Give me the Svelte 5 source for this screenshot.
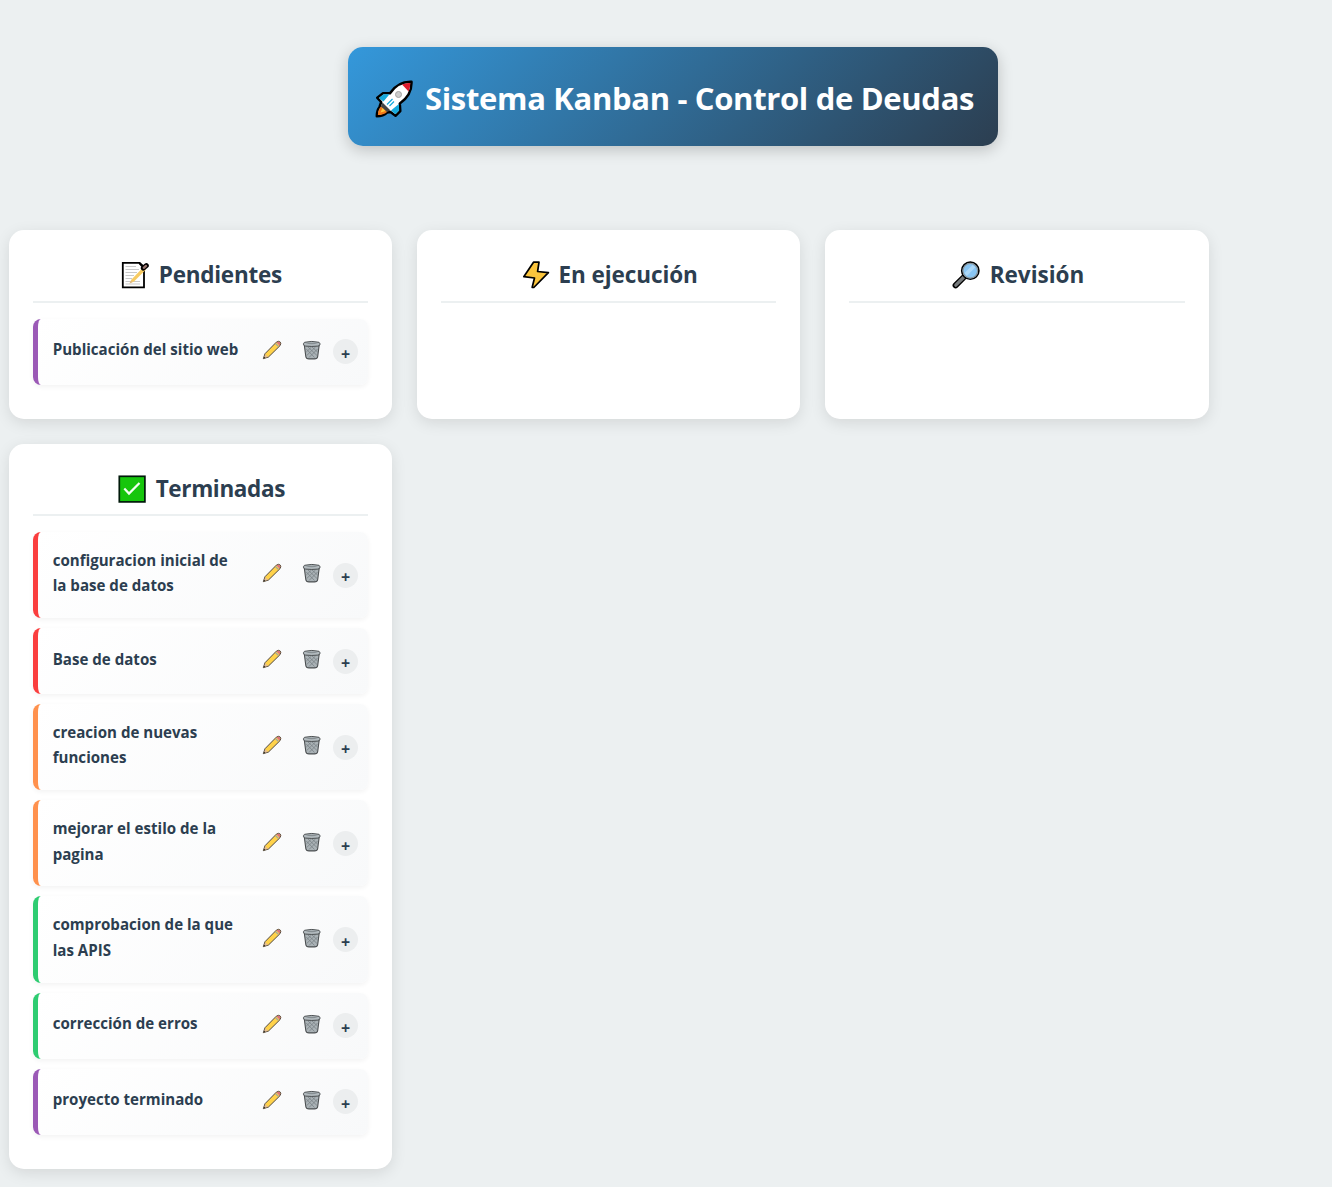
<script lang="ts">
  type Task = { lines: string[]; tone: string };
  type Column = { icon: string; title: string; cls: string; tasks: Task[] };

  const columns: Column[] = [
    {
      icon: 'memo', title: 'Pendientes', cls: 'pend',
      tasks: [{ lines: ['Publicación del sitio web'], tone: 'purple' }]
    },
    { icon: 'bolt', title: 'En ejecución', cls: 'ejec', tasks: [] },
    { icon: 'lens', title: 'Revisión', cls: 'revi', tasks: [] },
    {
      icon: 'check', title: 'Terminadas', cls: 'term',
      tasks: [
        { lines: ['configuracion inicial de', 'la base de datos'], tone: 'red' },
        { lines: ['Base de datos'], tone: 'red' },
        { lines: ['creacion de nuevas', 'funciones'], tone: 'orange' },
        { lines: ['mejorar el estilo de la', 'pagina'], tone: 'orange' },
        { lines: ['comprobacion de la que', 'las APIS'], tone: 'green' },
        { lines: ['corrección de erros'], tone: 'green' },
        { lines: ['proyecto terminado'], tone: 'purple' }
      ]
    }
  ];
</script>

<header>
  <h1>
    <svg class="rocket" viewBox="0 0 38 38" aria-hidden="true">
      <path d="M36.500 1.800C28 1.500 20.500 5 15 13.200L8 13.200 2.300 17.800 6.200 22 4.500 27C2.300 29.500 1.800 33 1.800 36.200 5.500 36.200 9 35.500 12 32.500L15.500 32 20.500 35.800 25.300 31 24.800 23.500C33 18 36.800 10 36.500 1.800Z" fill="#fff" stroke="#000" stroke-width="2.500" stroke-linejoin="round" />
      <path d="M14.500 14.200 8.500 14.300 3.800 17.900 8.500 21.500ZM23.800 24 24.200 30.500 20.500 34.300 16 30.500Z" fill="#17a9dc" />
      <path d="M27 4.400Q31 2.700 35.300 2.900 35.400 7.500 33.600 11.400Z" fill="#e01b2d" />
      <path d="M7.500 22.500 5.500 27.500 10.500 32.500 15.500 30.500Z" fill="#454545" />
      <path d="M6 26.500C3.700 28.800 3 32 2.900 35.100 6.500 35.100 9.500 34.200 12 32Z" fill="#f27818" />
      <path d="M7.500 28 5.500 32.500 10.500 31Z" fill="#ffca3a" />
      <circle cx="23.500" cy="14.500" r="3" fill="#ccc" stroke="#a3a3a3" />
      <path d="M17.500 19 12 24.500M19 21.500 14.500 26" stroke="#17a9dc" stroke-width="1.200" fill="none" />
    </svg>
    <span>Sistema Kanban - Control de Deudas</span>
  </h1>
</header>

<main>
  {#each columns as col}
    <section>
      <h2 class={col.cls}>
        <svg class="emoji" viewBox="0 0 28 28" aria-hidden="true">
          {#if col.icon === 'memo'}
            <path d="M1.800 1.800H18.500L23 6V26.300H1.800Z" fill="#fff" stroke="#000" stroke-width="1.800" />
            <path d="M4.500 5.500H15M4.500 8.500H18M4.500 11.500H16M4.500 14.500H13M4.500 17.500H11M4.500 20.500H19M4.500 23H19" stroke="#c9c9c9" stroke-width="1.200" />
            <path d="M18.300 2 22 6" stroke="#000" stroke-width="2" />
            <path d="M8.500 22.500 10.500 18.500 22.500 6 25 8.500 13 20.500Z" fill="#f7cb62" />
            <path d="M8.500 22.500 10 19.500 11.700 21Z" fill="#d9b58c" />
            <path d="M22.300 7.200 25.300 4.700" stroke="#000" stroke-width="5" stroke-linecap="round" />
            <path d="M22.800 6.800 25 4.900" stroke="#9a7770" stroke-width="2.300" stroke-linecap="round" />
          {:else if col.icon === 'bolt'}
            <path d="M11.500 1.200 17 1.200 15.600 10.500 26.400 11.600 11.800 26.500 10.200 26.300 12.500 17 1.800 15.700Z" fill="#fbc53d" stroke="#000" stroke-width="1.700" stroke-linejoin="round" />
          {:else if col.icon === 'lens'}
            <path d="M11.500 16.500 3.600 24.400" stroke="#000" stroke-width="6" stroke-linecap="round" />
            <path d="M11.500 16.500 3.800 24.200" stroke="#777b7d" stroke-width="3.200" stroke-linecap="round" />
            <circle cx="18.300" cy="9.700" r="8.600" fill="#89c6f4" stroke="#000" stroke-width="1.600" />
            <circle cx="18.300" cy="9.700" r="7.300" fill="none" stroke="#8b9499" stroke-width="1.100" />
            <path d="M12.500 12 20.500 4 23.500 6.300 14.800 15Z" fill="#bfe2fb" opacity=".65" />
          {:else}
            <rect x="1.300" y="1.300" width="25.600" height="25.600" fill="#16c60c" stroke="#00190a" stroke-width="1.700" />
            <path d="M6.300 13.500 11 18.600 21.500 8" fill="none" stroke="#f3fff2" stroke-width="2.200" />
          {/if}
        </svg>
        <span>{col.title}</span>
      </h2>
      <ul>
        {#each col.tasks as task}
          <li class={task.tone}>
            <p>{#each task.lines as line}<span>{line}</span>{/each}</p>
            <div class="actions">
              <button class="edit" aria-label="Editar">
                <svg viewBox="0 0 20 20" aria-hidden="true">
                  <path d="M1.300 18.700 3 13.700 14.300 2.200Q16.500.500 18.200 2 19.600 3.700 17.900 5.800L6.500 17Z" fill="#ffd24a" stroke="#51483f" stroke-width="1" stroke-linejoin="round" />
                  <path d="M14.500 2.600Q16.500 1 17.900 2.300 19 3.800 17.500 5.600Z" fill="#d9717d" />
                  <path d="M13.600 3.600 16.400 6.400" stroke="#9ca4a8" stroke-width="1.300" />
                  <path d="M1.500 18.500 3.400 14.200 5.900 16.700Z" fill="#e5bd94" />
                  <path d="M1.300 18.700 2.200 16.400 3.600 17.800Z" fill="#333" />
                </svg>
              </button>
              <button class="trash" aria-label="Eliminar">
                <svg viewBox="0 0 20 20" aria-hidden="true">
                  <path d="M2.300 5 3.800 16.500Q4.100 18.900 7 18.900H12.500Q15.400 18.900 15.700 16.500L17.200 5Z" fill="#aab2b6" stroke="#4b4f51" stroke-width="1.100" />
                  <path d="M4.300 9 12.500 17.500M6 7 15 15.500M10 7 15.500 12M15.500 9 7 17.500M13.500 7 4.700 15.500M9.500 7 4.300 12" stroke="#737b7f" stroke-width=".7" fill="none" />
                  <path d="M2.500 2.300Q9.800.600 17 2.300 18.200 2.800 17.900 4.900 17.400 5.900 15.900 6.100 9.800 6.800 3.600 6.100 2.100 5.900 1.600 4.900 1.300 2.800 2.500 2.300Z" fill="#b3bbbf" stroke="#4b4f51" stroke-width="1" />
                  <path d="M3.500 3.500Q9.800 2.200 16 3.500 9.800 4.900 3.500 3.500Z" fill="#868e92" />
                </svg>
              </button>
              <button class="plus" aria-label="Detalles"><span>+</span></button>
            </div>
          </li>
        {/each}
      </ul>
    </section>
  {/each}
</main>

<style>
  :global(body) {
    background: #ecf0f1;
    color: #2c3e50;
    font-family: "Open Sans", "Noto Sans", sans-serif;
    line-height: 1.6;
  }
  :global(*) { box-sizing: border-box; }
  header { padding: 47px 0 0 348px; }
  h1 {
    display: flex;
    align-items: center;
    width: 650px;
    height: 99px;
    margin: 0;
    padding: 4px 24px 0 27px;
    border-radius: 15px;
    background: linear-gradient(135deg, #3498db, #2c3e50);
    box-shadow: 0 4px 15px rgba(0, 0, 0, .2);
    color: #fff;
    font-size: 31px;
    font-weight: 700;
    letter-spacing: -.330px;
    white-space: nowrap;
  }
  .rocket { width: 38px; height: 38px; margin-right: 12px; flex: none; }
  main {
    display: grid;
    grid-template-columns: repeat(3, 1fr);
    gap: 25px;
    width: 1200px;
    margin: 84.200px 0 0 8.700px;
    padding-bottom: 18px;
  }
  section {
    padding: 24px;
    border-radius: 15px;
    background: #fff;
    box-shadow: 0 4px 15px rgba(0, 0, 0, .1);
  }
  h2 {
    display: flex;
    align-items: center;
    justify-content: center;
    height: 48.400px;
    margin: 0 0 16px;
    padding: 0 0 4px 2px;
    border-bottom: 2px solid #ecf0f1;
    font-size: 22.500px;
    font-weight: 700;
    white-space: nowrap;
  }
  .pend { letter-spacing: -.250px; }
  .ejec { letter-spacing: -.080px; }
  .term { letter-spacing: -.350px; }
  .emoji { width: 28px; height: 28px; margin-right: 10px; flex: none; }
  .ejec .emoji { margin-right: 9px; }
  ul { margin: 0; padding: 0; list-style: none; }
  li {
    display: flex;
    align-items: center;
    justify-content: space-between;
    min-height: 66px;
    margin-bottom: 10px;
    padding: 15.700px 10px 19.300px 15px;
    border-left: 5px solid;
    border-radius: 8px;
    background: linear-gradient(135deg, #fff, #f8f9fa);
    box-shadow: 0 2px 5px rgba(0, 0, 0, .05);
  }
  .purple { border-color: #9b59b6; }
  .red { border-color: #fa3e3e; }
  .orange { border-color: #ff914d; }
  .green { border-color: #2ecc71; }
  p { margin: 0; font-size: 15.100px; font-weight: 700; line-height: 25.600px; white-space: nowrap; }
  p span { display: block; }
  .actions { display: flex; align-items: center; }
  button { display: flex; align-items: center; justify-content: center; padding: 0; border: 0; background: none; color: inherit; font: inherit; }
  button svg { width: 20px; height: 20px; }
  .edit { margin-right: 20px; }
  .trash { margin-right: 11px; }
  .plus {
    width: 25px;
    height: 25px;
    margin-top: 4px;
    border-radius: 50%;
    background: #eceeef;
    font-size: 16px;
    font-weight: 700;
    line-height: 20px;
  }
  .plus span { padding-top: 4px; }
</style>
